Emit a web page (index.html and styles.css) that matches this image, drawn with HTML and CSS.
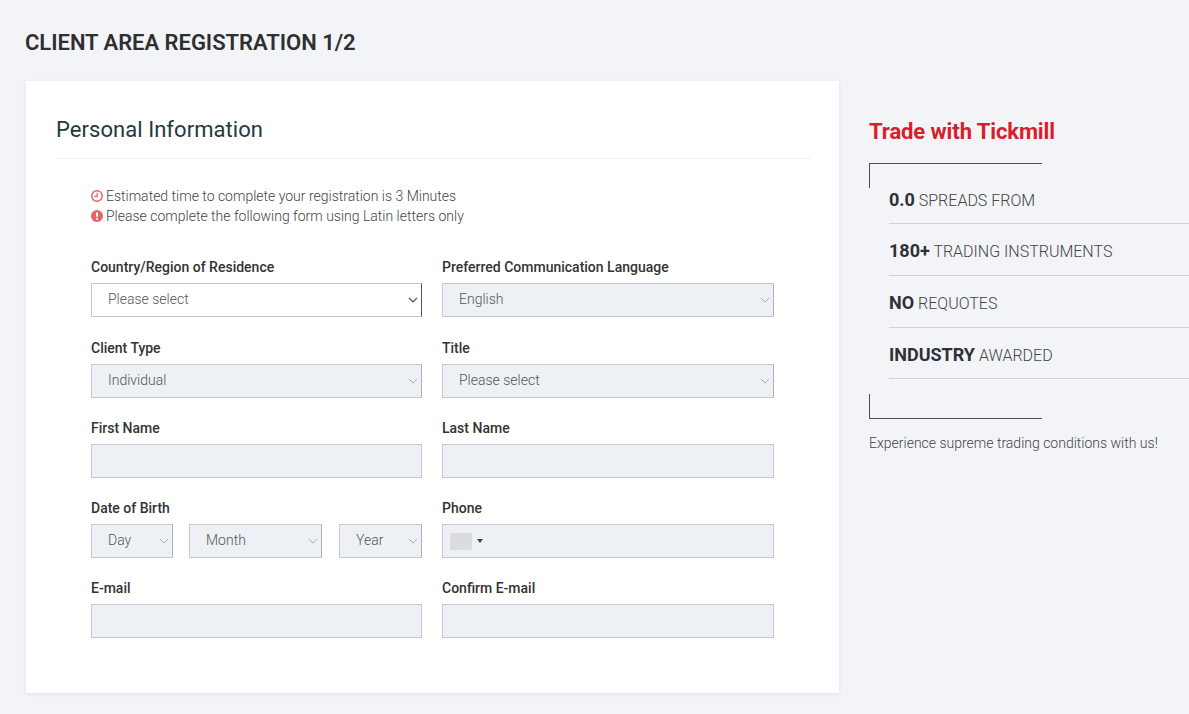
FILE: index.html
```html
<!DOCTYPE html>
<html lang="en">
<head>
<meta charset="utf-8">
<title>Client Area Registration</title>
<link rel="stylesheet" href="styles.css">
</head>
<body>
<h1 class="page-title">CLIENT AREA REGISTRATION 1/2</h1>
<div class="layout">
  <main class="card">
    <h2 class="card-title">Personal Information</h2>
    <div class="card-body">
      <div class="notes">
        <p class="note"><svg class="note-icon" viewBox="0 0 12 12"><circle cx="6" cy="6" r="5.2" fill="none" stroke="#e8646c" stroke-width="1.5"/><path d="M6.2 2.8v3.6H3.4" fill="none" stroke="#e8646c" stroke-width="1.3"/></svg>Estimated time to complete your registration is 3 Minutes</p>
        <p class="note"><svg class="note-icon" viewBox="0 0 12 12"><circle cx="6" cy="6" r="6" fill="#e8646c"/><path d="M6 2.4v4.4" stroke="#fff" stroke-width="2"/><path d="M6 8v1.8" stroke="#fff" stroke-width="2"/></svg>Please complete the following form using Latin letters only</p>
      </div>
      <div class="form-grid">
        <div class="field row-a">
          <label class="label">Country/Region of Residence</label>
          <div class="control select active"><span>Please select</span><svg class="chev" viewBox="0 0 10 6"><path d="M1 1l4 4 4-4" fill="none" stroke="currentColor" stroke-width="1.2"/></svg></div>
        </div>
        <div class="field row-a">
          <label class="label">Preferred Communication Language</label>
          <div class="control select"><span>English</span><svg class="chev" viewBox="0 0 10 6"><path d="M1 1l4 4 4-4" fill="none" stroke="currentColor" stroke-width="1"/></svg></div>
        </div>
        <div class="field">
          <label class="label">Client Type</label>
          <div class="control select"><span>Individual</span><svg class="chev" viewBox="0 0 10 6"><path d="M1 1l4 4 4-4" fill="none" stroke="currentColor" stroke-width="1"/></svg></div>
        </div>
        <div class="field">
          <label class="label">Title</label>
          <div class="control select"><span>Please select</span><svg class="chev" viewBox="0 0 10 6"><path d="M1 1l4 4 4-4" fill="none" stroke="currentColor" stroke-width="1"/></svg></div>
        </div>
        <div class="field">
          <label class="label">First Name</label>
          <div class="control"></div>
        </div>
        <div class="field">
          <label class="label">Last Name</label>
          <div class="control"></div>
        </div>
        <div class="field">
          <label class="label">Date of Birth</label>
          <div class="dob">
            <div class="control select"><span>Day</span><svg class="chev" viewBox="0 0 10 6"><path d="M1 1l4 4 4-4" fill="none" stroke="currentColor" stroke-width="1"/></svg></div>
            <div class="control select"><span>Month</span><svg class="chev" viewBox="0 0 10 6"><path d="M1 1l4 4 4-4" fill="none" stroke="currentColor" stroke-width="1"/></svg></div>
            <div class="control select"><span>Year</span><svg class="chev" viewBox="0 0 10 6"><path d="M1 1l4 4 4-4" fill="none" stroke="currentColor" stroke-width="1"/></svg></div>
          </div>
        </div>
        <div class="field">
          <label class="label">Phone</label>
          <div class="control phone"><span class="flag"></span><span class="caret"></span></div>
        </div>
        <div class="field">
          <label class="label">E-mail</label>
          <div class="control"></div>
        </div>
        <div class="field">
          <label class="label">Confirm E-mail</label>
          <div class="control"></div>
        </div>
      </div>
    </div>
  </main>
  <aside class="side">
    <h2 class="side-title">Trade with Tickmill</h2>
    <div class="bracket bracket-top"></div>
    <ul class="perks">
      <li class="perk"><b>0.0</b> SPREADS FROM</li>
      <li class="perk"><b>180+</b> TRADING INSTRUMENTS</li>
      <li class="perk"><b>NO</b> REQUOTES</li>
      <li class="perk"><b>INDUSTRY</b> AWARDED</li>
    </ul>
    <div class="bracket bracket-bottom"></div>
    <p class="side-note">Experience supreme trading conditions with us!</p>
  </aside>
</div>
</body>
</html>
```
FILE: styles.css
```css
* { box-sizing: border-box; }
html, body { margin: 0; height: 714px; overflow: hidden; }
body {
  background: #f3f4f8;
  font-family: Roboto, "Liberation Sans", sans-serif;
  color: #333;
  padding-left: 26px;
}
.page-title {
  margin: 0 0 0 -1px;
  height: 81px;
  padding-top: 29px;
  font-size: 22px;
  line-height: 28px;
  font-weight: 600;
  letter-spacing: -0.03px;
  color: #2f2f2f;
}
.layout { display: flex; gap: 30px; }
.card {
  width: 813px;
  height: 612px;
  flex: none;
  background: #fff;
  box-shadow: 0 1px 4px rgba(30, 40, 70, 0.08);
  padding: 35px 29px 0 30px;
}
.card-title {
  margin: 0;
  height: 43px;
  font-size: 22px;
  line-height: 28px;
  font-weight: 400;
  letter-spacing: 0.05px;
  color: #25383f;
  border-bottom: 1px solid #edeef2;
}
.card-body { padding: 27px 0 0 35px; }
.notes { height: 62px; }
.note {
  margin: 0;
  display: flex;
  align-items: center;
  font-size: 14px;
  line-height: 20px;
  font-weight: 300;
  color: #444;
}
.note-icon { width: 12px; height: 12px; margin-right: 3px; flex: none; }
.form-grid {
  display: grid;
  grid-template-columns: 331px 332px;
  column-gap: 20px;
  margin-top: 11px;
}
.field { height: 80px; }
.row-a { height: 81px; }
.label {
  display: block;
  height: 24px;
  font-size: 14px;
  line-height: 16px;
  font-weight: 500;
  color: #333;
}
.control {
  height: 34px;
  background: #edf0f5;
  border: 1px solid #c0cbd6;
  display: flex;
  align-items: center;
}
.select {
  justify-content: space-between;
  padding: 0 3px 0 16px;
  font-size: 14px;
  font-weight: 300;
  color: #555;
  border-color: #c4cad1;
  border-right-color: #aab2bb;
}
.select span { padding-bottom: 2px; }
.chev { width: 10px; height: 6px; color: #a5adb6; flex: none; }
.active { background: #fff; border-right-color: #555; }
.active .chev { color: #555; }
.dob { display: flex; }
.dob .control:nth-child(1) { width: 82px; }
.dob .control:nth-child(2) { width: 133px; margin-left: 16px; }
.dob .control:nth-child(3) { width: 83px; margin-left: 17px; }
.phone { padding-left: 7px; }
.flag { width: 22px; height: 17px; background: #dcdcdc; border-radius: 1px; }
.caret {
  margin-left: 5px;
  border-left: 3px solid transparent;
  border-right: 3px solid transparent;
  border-top: 4px solid #444;
}
.side { flex: 1; min-width: 0; }
.side-title {
  margin: 0;
  padding-top: 37px;
  height: 82px;
  font-size: 22px;
  line-height: 28px;
  font-weight: 700;
  letter-spacing: -0.1px;
  color: #d71f2b;
}
.bracket {
  width: 173px;
  height: 25px;
  border-left: 1px solid #4a4f58;
}
.bracket-top { border-top: 1px solid #4a4f58; }
.bracket-bottom { border-bottom: 1px solid #4a4f58; margin-top: 15px; }
.perks { list-style: none; margin: 0; padding: 0 0 0 20px; }
.perk {
  height: 52px;
  padding-top: 16px;
  font-size: 16px;
  line-height: 22px;
  font-weight: 300;
  color: #444;
  border-bottom: 1px solid #d0d3d9;
}
.perk:first-child { height: 36px; padding-top: 1px; }
.perk:last-child { height: 51px; padding-top: 16px; }
.perk b { font-size: 18px; font-weight: 700; color: #2f3136; }
.side-note {
  margin: 15px 0 0;
  font-size: 14px;
  line-height: 18px;
  font-weight: 300;
  color: #444;
}
```
